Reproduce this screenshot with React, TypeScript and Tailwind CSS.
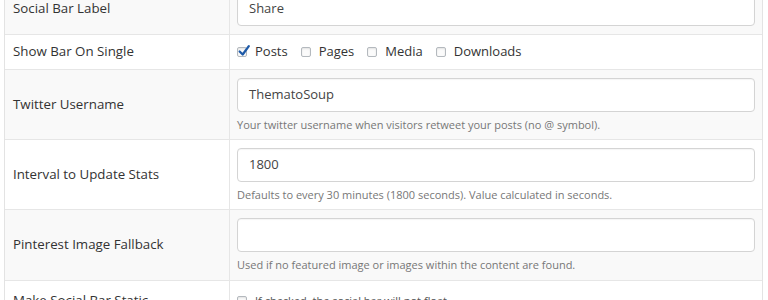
import React from "react";

const Checkbox = ({ checked = false }: { checked?: boolean }) => (
  <span className="relative inline-flex h-[10px] w-[10px] shrink-0 items-center justify-center rounded-[2px] border border-[#b4b9be] bg-[#fbfbfb] shadow-[inset_0_1px_2px_rgba(0,0,0,0.1)]">
    {checked && (
      <svg viewBox="0 0 16 16" className="absolute -left-[1px] -top-[4px] h-[14px] w-[14px]">
        <path d="M3 8.5 L6.5 12 L13.5 2.5" fill="none" stroke="#1e5aa8" strokeWidth="2.6" strokeLinecap="round" strokeLinejoin="round" />
      </svg>
    )}
  </span>
);

const TextInput = ({ value }: { value: string }) => (
  <div className="flex h-[34px] w-full items-center rounded-[4px] border border-[#d4d4d4] bg-white pl-[11px] text-[13px] text-[#444] shadow-[inset_0_1px_1px_rgba(0,0,0,0.04)]">
    {value}
  </div>
);

const Help = ({ children }: { children: React.ReactNode }) => (
  <p className="mt-[5px] text-[11px] leading-[16px] text-[#777]">{children}</p>
);

const Row = ({
  label,
  gray,
  h,
  last,
  children,
}: {
  label: string;
  gray?: boolean;
  h: string;
  last?: boolean;
  children: React.ReactNode;
}) => (
  <div className={`flex ${h} ${last ? "" : "border-b border-[#e6e6e6]"} ${gray ? "bg-[#f9f9f9]" : "bg-white"}`}>
    <div className="flex w-[225px] shrink-0 items-center border-r border-[#e6e6e6] pl-[8px] text-[13.3px] text-[#333]">
      {label}
    </div>
    <div className="flex min-w-0 flex-1 flex-col justify-start px-[7px]">{children}</div>
  </div>
);

export default function App() {
  return (
    <div className="h-[300px] w-[768px] overflow-hidden bg-white" style={{ fontFamily: '"Open Sans", "Noto Sans", sans-serif' }}>
      <div className="-mt-[16px] ml-[4px] w-[759px] border-x border-[#e3e3e3]">
        <Row label="Social Bar Label" gray h="h-[51px]">
          <div className="pt-[8px]">
            <TextInput value="Share" />
          </div>
        </Row>
        <Row label="Show Bar On Single" h="h-[35px]">
          <div className="flex h-full items-center gap-[8px] pb-[1px] text-[13px] text-[#333]">
            <Checkbox checked />
            <span className="mr-[5px]">Posts</span>
            <Checkbox />
            <span className="mr-[5px]">Pages</span>
            <Checkbox />
            <span className="mr-[5px]">Media</span>
            <Checkbox />
            <span>Downloads</span>
          </div>
        </Row>
        <Row label="Twitter Username" gray h="h-[70px]">
          <div className="pt-[8px]">
            <TextInput value="ThematoSoup" />
            <Help>Your twitter username when visitors retweet your posts (no @ symbol).</Help>
          </div>
        </Row>
        <Row label="Interval to Update Stats" h="h-[70px]">
          <div className="pt-[8px]">
            <TextInput value="1800" />
            <Help>Defaults to every 30 minutes (1800 seconds). Value calculated in seconds.</Help>
          </div>
        </Row>
        <Row label="Pinterest Image Fallback" gray h="h-[71px]">
          <div className="pt-[8px]">
            <TextInput value="" />
            <Help>Used if no featured image or images within the content are found.</Help>
          </div>
        </Row>
        <Row label="Make Social Bar Static" h="h-[40px]" last>
          <div className="flex items-center gap-[8px] pt-[12px] text-[11px] text-[#555]">
            <Checkbox />
            <span>If checked, the social bar will not float.</span>
          </div>
        </Row>
      </div>
    </div>
  );
}
